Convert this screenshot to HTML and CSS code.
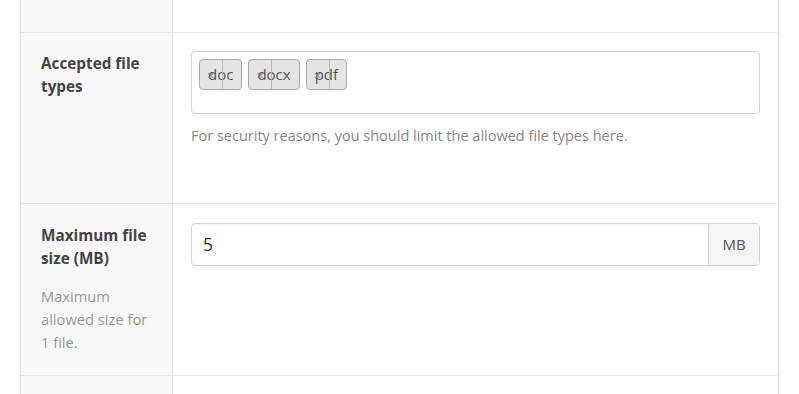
FILE: index.html
```html
<!DOCTYPE html>
<html>
<head>
<meta charset="utf-8">
<link rel="stylesheet" href="styles.css">
</head>
<body>
<div class="form">
  <div class="row row-top">
    <div class="label-cell"></div>
    <div class="field-cell"></div>
  </div>
  <div class="row row-types">
    <div class="label-cell">
      <div class="label">Accepted file types</div>
    </div>
    <div class="field-cell">
      <div class="tags">
        <span class="tag"><span class="remove">×</span>doc</span>
        <span class="tag"><span class="remove">×</span>docx</span>
        <span class="tag"><span class="remove">×</span>pdf</span>
      </div>
      <div class="help">For security reasons, you should limit the allowed file types here.</div>
    </div>
  </div>
  <div class="row row-size">
    <div class="label-cell">
      <div class="label">Maximum file size (MB)</div>
      <div class="desc">Maximum allowed size for 1 file.</div>
    </div>
    <div class="field-cell">
      <div class="input-group">
        <div class="input">5</div>
        <div class="addon">MB</div>
      </div>
    </div>
  </div>
  <div class="row row-bottom">
    <div class="label-cell"></div>
    <div class="field-cell"></div>
  </div>
</div>
</body>
</html>
```

FILE: styles.css
```css
html, body {
  margin: 0;
  padding: 0;
  background: #fff;
  font-family: "Open Sans", "Noto Sans", sans-serif;
  overflow: hidden;
}
.form {
  margin-left: 20px;
  width: 757px;
  border-left: 1px solid #e6e6e6;
  border-right: 1px solid #e6e6e6;
}
.row {
  display: grid;
  grid-template-columns: 152px 1fr;
  border-bottom: 1px solid #e6e6e6;
}
.label-cell {
  background: #f9f9f9;
  border-right: 1px solid #e6e6e6;
  padding: 19px 20px;
}
.field-cell {
  padding: 18px 18px;
}
.row-top { height: 32px; }
.row-top .label-cell, .row-top .field-cell { padding: 0; }
.row-types { height: 170px; }
.row-size .label-cell { padding: 20px 20px 21px; }
.row-bottom { height: 40px; }
.label {
  font-size: 15.3px;
  font-weight: 700;
  line-height: 23px;
  color: #444;
}
.desc {
  margin-top: 15px;
  font-size: 14.7px;
  line-height: 23px;
  color: #999;
}
.tags {
  height: 54px;
  border: 1px solid #d2d2d2;
  border-radius: 4px;
  padding: 7px 7px 0;
  display: flex;
  align-items: flex-start;
  gap: 6px;
}
.tag {
  position: relative;
  height: 29px;
  line-height: 28px;
  padding: 0 8px;
  background: #e4e4e4;
  border: 1px solid #aaa;
  border-radius: 4px;
  font-size: 15px;
  color: #555;
}
.remove {
  position: absolute;
  left: 0;
  top: 0;
  bottom: 0;
  width: 15px;
  padding-left: 7px;
  border-right: 1px solid #b8b8b8;
  font-size: 13px;
  line-height: 31px;
  color: #7f7f7f;
  z-index: 1;
}
.help {
  margin-top: 12px;
  font-size: 14.5px;
  line-height: 20px;
  color: #888;
}
.input-group {
  display: flex;
  height: 41px;
  border: 1px solid #d2d2d2;
  border-radius: 4px;
  box-shadow: inset 0 1px 1px rgba(0,0,0,0.05);
  overflow: hidden;
}
.row-size .field-cell { padding-top: 19px; }
.input {
  flex: 1;
  padding: 0 11px;
  font-size: 17.5px;
  line-height: 41px;
  color: #333;
}
.addon {
  width: 50px;
  border-left: 1px solid #d2d2d2;
  background: #f5f5f5;
  text-align: center;
  font-size: 15px;
  line-height: 41px;
  color: #555;
}
```
